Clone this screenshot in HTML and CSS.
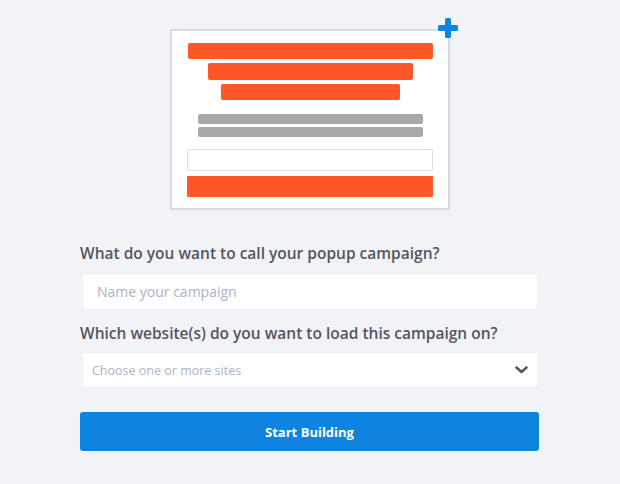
FILE: index.html
```
<!DOCTYPE html>
<html>
<head>
<meta charset="utf-8">
<link rel="stylesheet" href="styles.css">
</head>
<body>
<div class="page">
  <div class="preview">
    <div class="card">
      <div class="bar bar-1"></div>
      <div class="bar bar-2"></div>
      <div class="bar bar-3"></div>
      <div class="line line-1"></div>
      <div class="line line-2"></div>
      <div class="mini-input"></div>
      <div class="mini-button"></div>
      <svg class="plus" width="20" height="20" viewBox="0 0 20 20">
        <rect x="7" y="0" width="6" height="20" rx="1.5" fill="#0b86e1"/>
        <rect x="0" y="7" width="20" height="6" rx="1.5" fill="#0b86e1"/>
      </svg>
    </div>
  </div>
  <form class="form">
    <label class="label label-name">What do you want to call your popup campaign?</label>
    <div class="field field-name"><span class="placeholder">Name your campaign</span></div>
    <label class="label label-sites">Which website(s) do you want to load this campaign on?</label>
    <div class="field field-select">
      <span class="placeholder small">Choose one or more sites</span>
      <svg class="chevron" width="13" height="8" viewBox="0 0 13 8">
        <path d="M1.5 1.5 L6.5 6 L11.5 1.5" fill="none" stroke="#555a66" stroke-width="2.6" stroke-linecap="round" stroke-linejoin="round"/>
      </svg>
    </div>
    <div class="button">Start Building</div>
  </form>
</div>
</body>
</html>
```
FILE: styles.css
```
html, body {
  margin: 0;
  padding: 0;
  background: #f2f3f7;
}
body {
  width: 620px;
  height: 484px;
  overflow: hidden;
  font-family: "Open Sans", Lato, sans-serif;
}
.page {
  display: flex;
  flex-direction: column;
  align-items: flex-start;
  padding-top: 29px;
}
.preview {
  display: flex;
  padding-left: 170px;
}
.card {
  position: relative;
  box-sizing: border-box;
  width: 280px;
  height: 181px;
  background: #fff;
  border: 2px solid #dadada;
  display: flex;
  flex-direction: column;
  align-items: center;
  padding-top: 12px;
}
.bar {
  background: #ff5628;
  height: 16px;
  border-radius: 2px;
}
.bar-1 { width: 245px; }
.bar-2 { width: 205px; margin-top: 4px; height: 17px; }
.bar-3 { width: 179px; margin-top: 4px; }
.line {
  background: #a9a9a9;
  height: 10px;
  width: 225px;
  border-radius: 2px;
}
.line-1 { margin-top: 14px; }
.line-2 { margin-top: 3px; }
.mini-input {
  box-sizing: border-box;
  width: 246px;
  height: 22px;
  border: 1px solid #dedede;
  border-radius: 2px;
  margin-top: 12px;
}
.mini-button {
  width: 246px;
  height: 21px;
  background: #ff5628;
  border-radius: 1px;
  margin-top: 5px;
}
.plus {
  position: absolute;
  top: -13px;
  right: -10px;
}
.form {
  width: 459px;
  margin: 33px 0 0 80px;
  display: flex;
  flex-direction: column;
}
.label {
  font-size: 15.5px;
  font-weight: 600;
  color: #54565f;
  line-height: 20px;
  white-space: nowrap;
}
.field {
  box-sizing: border-box;
  background: #fff;
  border: 1px solid #eceef3;
  display: flex;
  align-items: center;
  margin-left: 2px;
  width: 456px;
}
.field-name {
  height: 37px;
  margin-top: 10px;
  margin-bottom: 13px;
  padding-left: 14px;
}
.field-select {
  height: 36px;
  margin-top: 9px;
  padding-left: 9px;
  padding-right: 9px;
  justify-content: space-between;
}
.placeholder {
  font-size: 14px;
  color: #aab3c6;
}
.placeholder.small {
  font-size: 12.5px;
}
.chevron {
  display: block;
}
.button {
  margin-top: 24px;
  height: 39px;
  background: #0f83e0;
  border-radius: 3px;
  color: #fff;
  font-size: 13px;
  font-weight: 700;
  display: flex;
  align-items: center;
  justify-content: center;
}
```
